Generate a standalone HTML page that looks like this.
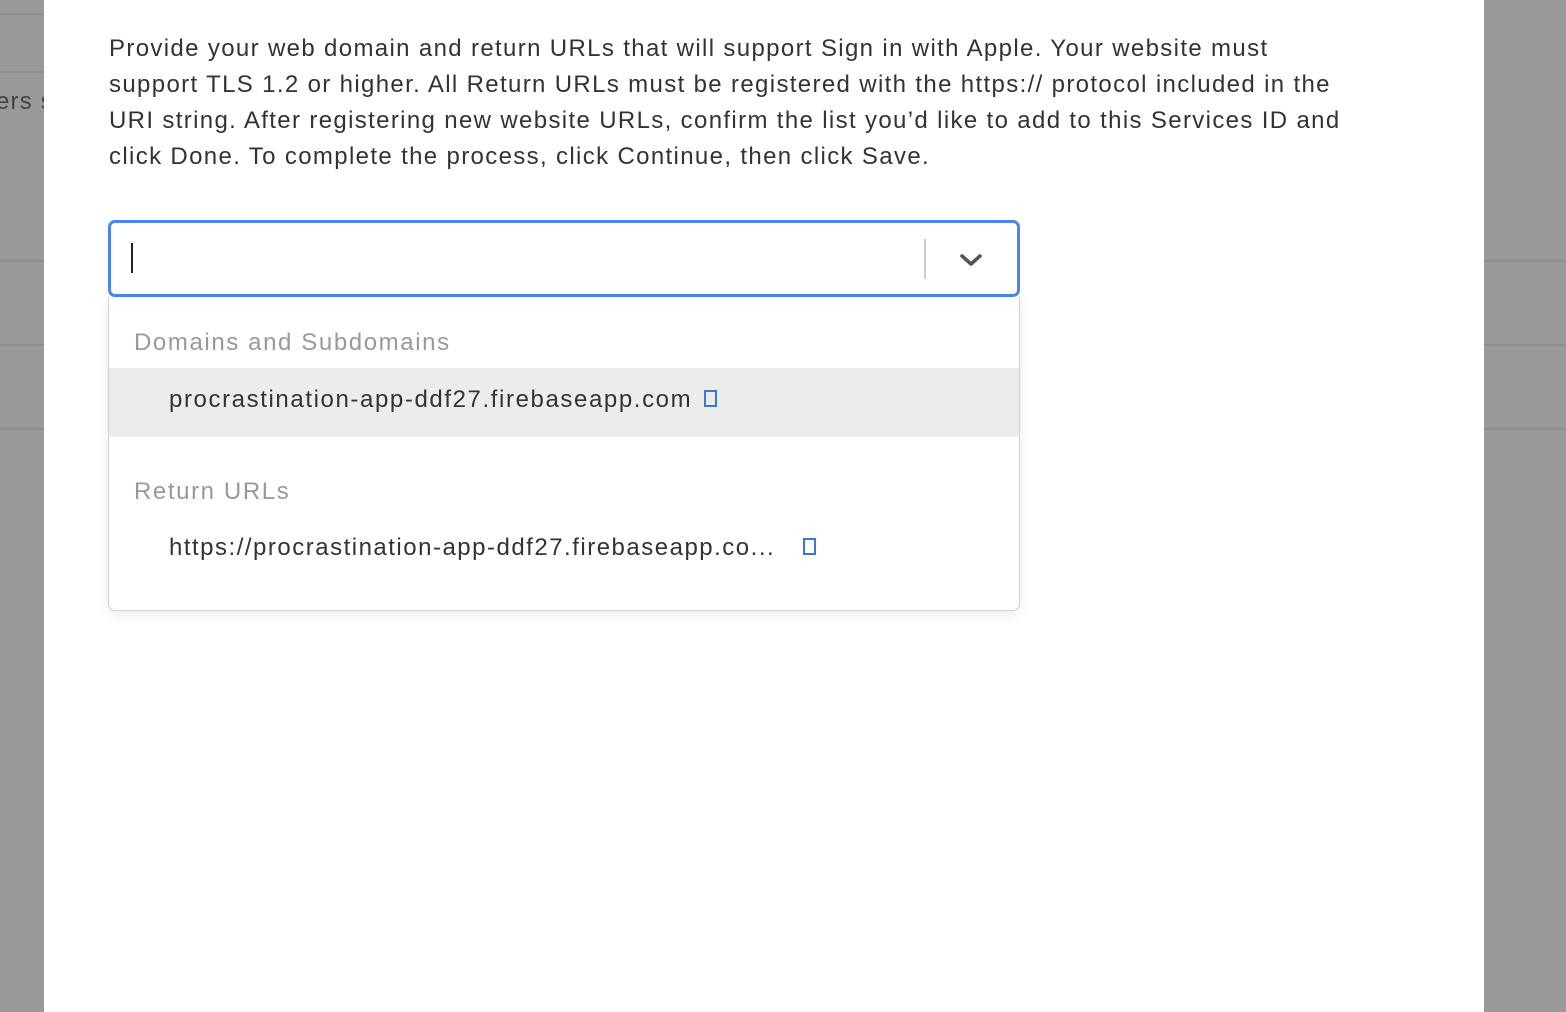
<!DOCTYPE html>
<html><head><meta charset="utf-8"><style>
*{margin:0;padding:0;box-sizing:border-box}
html,body{width:1566px;height:1012px;overflow:hidden;background:#999;font-family:"Liberation Sans",Arial,sans-serif}
.line{position:absolute;left:0;height:2px;background:#8e8e8e}
.modal{position:absolute;left:44px;top:0;width:1440px;height:1012px;background:#fff}
.p{position:absolute;left:109px;top:31px;font-size:24px;line-height:36px;color:#333;white-space:nowrap;letter-spacing:1.35px}
.input{position:absolute;left:108px;top:220px;width:912px;height:77px;border:3px solid #4a86ee;border-radius:7px;background:#fff}
.caret{position:absolute;left:20px;top:20px;width:2px;height:30px;background:#222}
.div{position:absolute;left:813px;top:16px;width:2px;height:40px;background:#ccc}
.dd{position:absolute;left:108px;top:297px;width:912px;height:314px;border:1px solid #d2d2d2;border-top:none;border-radius:0 0 7px 7px;background:#fff;box-shadow:0 4px 14px rgba(0,0,0,0.08)}
.h{position:absolute;left:25px;font-size:24px;color:#999;letter-spacing:1.6px}
.it{position:absolute;left:60px;font-size:24px;color:#333;white-space:nowrap;letter-spacing:1.6px}
.sq{position:absolute;width:13px;height:17px;border:2px solid #3a78d2}
</style></head><body>
<div class="line" style="top:13px;width:44px"></div>
<div class="line" style="top:71px;width:44px"></div>
<div class="line" style="top:260px;width:44px"></div>
<div class="line" style="top:344px;width:44px"></div>
<div class="line" style="top:428px;width:44px"></div>
<div class="line" style="top:260px;left:1484px;width:82px"></div>
<div class="line" style="top:344px;left:1484px;width:82px"></div>
<div class="line" style="top:428px;left:1484px;width:82px"></div>
<div style="position:absolute;left:-4px;top:88px;font-size:24px;color:#444;letter-spacing:1.2px">ers s</div>
<div class="modal"></div>
<div class="p">Provide your web domain and return URLs that will support Sign in with Apple. Your website must<br>support TLS 1.2 or higher. All Return URLs must be registered with the https:// protocol included in the<br>URI string. After registering new website URLs, confirm the list you’d like to add to this Services ID and<br>click Done. To complete the process, click Continue, then click Save.</div>
<div class="input"><div class="caret"></div><div class="div"></div>
<svg style="position:absolute;left:848px;top:29px" width="24" height="16" viewBox="0 0 24 16"><path d="M3 4 L12 12 L21 4" fill="none" stroke="#555" stroke-width="3.6" stroke-linecap="round" stroke-linejoin="round"/></svg>
</div>
<div class="dd">
<div class="h" style="top:32px">Domains and Subdomains</div>
<div style="position:absolute;left:0;top:71px;width:910px;height:69px;background:#ececec"></div>
<div class="it" style="top:89px">procrastination-app-ddf27.firebaseapp.com</div>
<div class="sq" style="left:595px;top:93px"></div>
<div class="h" style="top:181px">Return URLs</div>
<div class="it" style="top:237px;letter-spacing:1.5px">https://procrastination-app-ddf27.firebaseapp.co...</div>
<div class="sq" style="left:694px;top:241px"></div>
</div>
</body></html>
